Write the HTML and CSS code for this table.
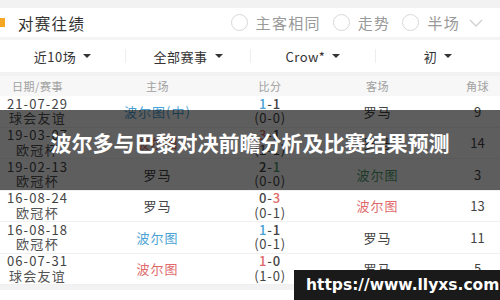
FILE: index.html
```html
<!DOCTYPE html>
<html lang="zh">
<head>
<meta charset="utf-8">
<link rel="stylesheet" href="styles.css">
</head>
<body>
<div class="page">
  <div class="topstrip"></div>
  <div class="head">
    <div class="title"><span class="mark"></span>对赛往绩</div>
    <div class="opts">
      <span class="radio"></span><span class="opt">主客相同</span>
      <span class="radio"></span><span class="opt">走势</span>
      <span class="radio"></span><span class="opt">半场</span>
      <svg class="chev" width="16" height="10" viewBox="0 0 16 10"><path d="M2 2 L8 8 L14 2" fill="none" stroke="#cfcfcf" stroke-width="1.3"/></svg>
    </div>
  </div>
  <div class="filters">
    <div class="f">近10场<span class="caret"></span></div>
    <div class="f">全部赛事<span class="caret"></span></div>
    <div class="f">Crow*<span class="caret"></span></div>
    <div class="f">初<span class="caret"></span></div>
  </div>
  <div class="table">
    <div class="row th">
      <div>日期/赛事</div><div>主场</div><div>比分</div><div>客场</div><div>角球</div>
    </div>
    <div class="row">
      <div class="d">21-07-29<br><span class="c">球会友谊</span></div>
      <div class="t blue">波尔图(中)</div>
      <div class="s"><b><span class="blue">1</span>-1</b><br>(0-0)</div>
      <div class="t">罗马</div>
      <div class="k">9</div>
    </div>
    <div class="row">
      <div class="d">19-03-07<br><span class="c">欧冠杯</span></div>
      <div class="t red">波尔图</div>
      <div class="s"><b><span class="red">3</span>-1</b><br>(1-1)</div>
      <div class="t">罗马</div>
      <div class="k">14</div>
    </div>
    <div class="row">
      <div class="d">19-02-13<br><span class="c">欧冠杯</span></div>
      <div class="t">罗马</div>
      <div class="s"><b>2-<span class="green">1</span></b><br>(0-0)</div>
      <div class="t green">波尔图</div>
      <div class="k">3</div>
    </div>
    <div class="row">
      <div class="d">16-08-24<br><span class="c">欧冠杯</span></div>
      <div class="t">罗马</div>
      <div class="s"><b>0-<span class="red">3</span></b><br>(0-1)</div>
      <div class="t red">波尔图</div>
      <div class="k">13</div>
    </div>
    <div class="row">
      <div class="d">16-08-18<br><span class="c">欧冠杯</span></div>
      <div class="t blue">波尔图</div>
      <div class="s"><b><span class="blue">1</span>-1</b><br>(0-1)</div>
      <div class="t">罗马</div>
      <div class="k">11</div>
    </div>
    <div class="row">
      <div class="d">06-07-31<br><span class="c">球会友谊</span></div>
      <div class="t red">波尔图</div>
      <div class="s"><b><span class="red">1</span>-0</b><br>(1-0)</div>
      <div class="t">罗马</div>
      <div class="k">5</div>
    </div>
  </div>
  <div class="bottomstrip"></div>
  <div class="band"><h1>波尔多与巴黎对决前瞻分析及比赛结果预测</h1></div>
  <div class="wm">https://www.llyxs.com</div>
</div>
</body>
</html>
```
FILE: styles.css
```css
html, body { margin: 0; padding: 0; }
body {
  width: 500px; height: 300px; overflow: hidden; background: #fff;
  font-family: "Noto Sans CJK SC", "Noto Sans", sans-serif;
  color: #333;
}
.page { position: relative; width: 500px; height: 300px; overflow: hidden; }
.topstrip { height: 8px; background: #f2f2f2; }
.head {
  height: 29px; display: flex; align-items: center; justify-content: space-between;
  border-bottom: 3px solid #f4f4f4;
}
.title { display: flex; align-items: center; font-size: 15.5px; letter-spacing: 1.3px; color: #333; }
.mark { width: 5px; height: 9px; background: #f5a623; margin-right: 13px; }
.opts { display: flex; align-items: center; padding-right: 16px; }
.radio {
  border: 1px solid #d8d8d8; border-radius: 50%;
  box-sizing: border-box; margin-right: 8px; width: 17px; height: 17px;
}
.opt { font-size: 15px; color: #999; letter-spacing: 1.3px; margin-right: 12px; }
.chev { margin-left: -4px; }
.filters {
  height: 32px; display: grid; grid-template-columns: repeat(4, 1fr);
  align-items: center; border-bottom: 4px solid #f2f2f2;
}
.f {
  display: flex; align-items: center; justify-content: center;
  font-size: 13px; color: #333; letter-spacing: 0.5px;
  border-left: 1px solid #eee; height: 14px;
}
.f:first-child { border-left: none; }
.caret {
  width: 0; height: 0; margin-left: 7px;
  border-left: 4px solid transparent; border-right: 4px solid transparent;
  border-top: 4px solid #333;
}
.row {
  display: grid; grid-template-columns: 75px 165px 60px 155px 45px;
  height: 30.5px; border-bottom: 1px solid #f0f0f0; align-items: center;
  text-align: center; background: #fff;
}
.row.th { height: 20px; background: #f7f7f7; border-bottom: none; font-size: 11px; color: #a0a0a0; letter-spacing: 0.5px; }
.d { font-size: 13px; line-height: 14.5px; letter-spacing: 1.1px; color: #444; }
.d .c { letter-spacing: 1.3px; color: #555; }
.t { font-size: 13px; letter-spacing: 1px; color: #444; }
.s { font-size: 13px; line-height: 14.5px; color: #444; letter-spacing: 0.8px; }
.s b { font-weight: 500; }
.k { font-size: 13px; color: #444; }
.blue { color: #4aa3d4; }
.red { color: #e06a6a; }
.green { color: #4f9d6e; }
.bottomstrip { height: 5px; background: #f2f2f2; }
.band {
  position: absolute; left: 0; top: 110px; width: 500px; height: 80px;
  background: rgba(0,0,0,0.63); display: flex; justify-content: center; align-items: flex-start;
}
.band h1 {
  margin: 20px 0 0; font-size: 21px; font-weight: 700; color: #fff; letter-spacing: 0;
  font-family: "Noto Sans CJK SC", sans-serif; line-height: 24px;
}
.wm {
  position: absolute; left: 294px; top: 270px; width: 206px; height: 30px;
  background: #1a1a1a; color: #fff; font-family: "DejaVu Sans", sans-serif; font-weight: 700;
  font-size: 15.5px; line-height: 30px; padding-left: 12px; box-sizing: border-box;
}
```
